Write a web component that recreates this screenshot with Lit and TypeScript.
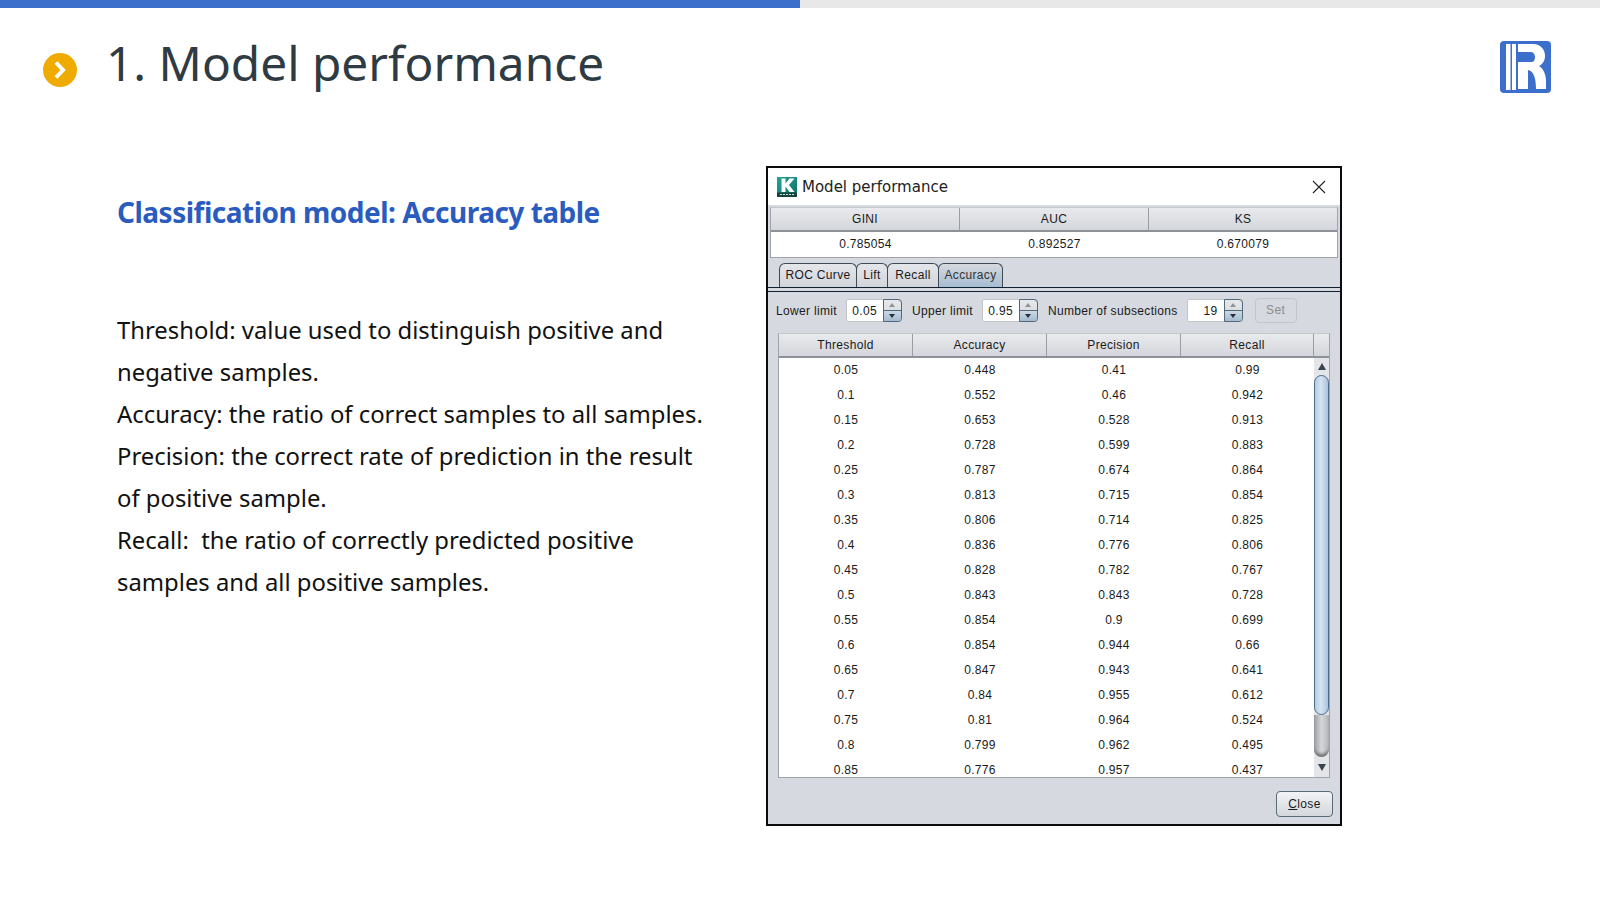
import { LitElement, html, css } from "lit";
import { customElement } from "lit/decorators.js";

const rows = [
  ["0.05","0.448","0.41","0.99"],["0.1","0.552","0.46","0.942"],["0.15","0.653","0.528","0.913"],
  ["0.2","0.728","0.599","0.883"],["0.25","0.787","0.674","0.864"],["0.3","0.813","0.715","0.854"],
  ["0.35","0.806","0.714","0.825"],["0.4","0.836","0.776","0.806"],["0.45","0.828","0.782","0.767"],
  ["0.5","0.843","0.843","0.728"],["0.55","0.854","0.9","0.699"],["0.6","0.854","0.944","0.66"],
  ["0.65","0.847","0.943","0.641"],["0.7","0.84","0.955","0.612"],["0.75","0.81","0.964","0.524"],
  ["0.8","0.799","0.962","0.495"],["0.85","0.776","0.957","0.437"],
];

@customElement("app-root")
export class AppRoot extends LitElement {
  static styles = css`
    :host { display: block; width: 1600px; height: 900px; overflow: hidden; background: #fff; font-family: "Noto Sans", sans-serif; }
    .progress { height: 8px; background: #e8e8e8; }
    .progress div { width: 800px; height: 8px; background: #3c6ecb; }
    .head { display: flex; align-items: flex-start; height: 158px; }
    .bullet { width: 34px; height: 34px; margin: 45px 0 0 43px; flex: none; }
    h1 { margin: 20px 0 0 29px; font-size: 47.8px; line-height: 70px; font-weight: 400; color: #2f3b43; flex: 1; }
    .logo { width: 51px; height: 52px; margin: 33px 49px 0 0; flex: none; }
    .main { display: flex; align-items: flex-start; }
    .left { width: 649px; margin-left: 117px; flex: none; }
    h2 { margin: 26px 0 0; font-size: 28px; line-height: 40px; font-weight: 700; color: #2a5cc0; letter-spacing: -0.5px; }
    .desc { margin: 77px 0 0; font-size: 23.85px; line-height: 42px; color: #111; white-space: pre-wrap; }

    .dlg { width: 576px; height: 660px; box-sizing: border-box; border: 2px solid #0c0c0c; background: #d6d9df; display: flex; flex-direction: column; font: 12px "Liberation Sans", Arial, sans-serif; letter-spacing: 0.33px; color: #1a1a1a; }
    .tb { height: 37px; background: #fff; display: flex; align-items: center; flex: none; letter-spacing: 0; }
    .tb .k { width: 20px; height: 20px; margin: 0 5px 0 9px; }
    .tb span { flex: 1; font: 15px "DejaVu Sans", sans-serif; color: #222; }
    .tb .x { width: 14px; height: 14px; margin-right: 14px; }
    .metrics { margin: 2px 2px 0 2px; border: 1px solid #a0a4aa; border-top: 1px solid #c4c7cc; background: #fff; flex: none; }
    .hrow { display: grid; background: linear-gradient(#e9eaed, #d3d6db); border-bottom: 2px solid #8e9298; height: 22px; line-height: 22px; text-align: center; }
    .hrow > div { border-right: 1px solid #9a9ea4; }
    .hrow > div:last-child { border-right: 0; }
    .m3 { grid-template-columns: 189px 189px 1fr; }
    .vrow { display: grid; grid-template-columns: 189px 189px 1fr; height: 25px; line-height: 25px; text-align: center; }
    .tabs { display: flex; margin: 5px 0 0 11px; height: 24px; flex: none; }
    .tab { box-sizing: border-box; height: 24px; line-height: 22px; border: 1px solid #3f4a55; border-bottom: 0; border-radius: 6px 6px 0 0; text-align: center; background: linear-gradient(#e4e6ea, #d2d5db); margin-right: -1px; }
    .tab.a { background: linear-gradient(#d6d9df, #a6bdd2); color: #333; }
    .tab-w1 { width: 78px; } .tab-w2 { width: 32px; } .tab-w3 { width: 52px; } .tab-w4 { width: 65px; }
    .tl { height: 3px; border-top: 1px solid #0f2030; border-bottom: 1px solid #0f2030; flex: none; }
    .ctl { display: flex; align-items: center; height: 25px; margin: 6px 0 0 8px; flex: none; white-space: nowrap; }
    .lbl { margin-right: 9px; }
    .lbl.n { margin-left: 10px; }
    .spin { box-sizing: border-box; width: 56px; display: flex; height: 23px; border: 1px solid #c3c6cb; border-radius: 2px; background: #fff; flex: none; }
    .spin .v { flex: 1; line-height: 23px; text-align: right; padding-right: 6px; }
    .btns { width: 17px; border: 1px solid #54687c; border-radius: 0 4px 4px 0; margin: -1px -1px -1px 0; display: flex; flex-direction: column; background: linear-gradient(#e6e8eb, #d2d5da); overflow: hidden; }
    .btns div { flex: 1; display: flex; align-items: center; justify-content: center; }
    .btns div + div { background: linear-gradient(#cdd9e4, #a3bbd0); border-top: 1px solid #54687c; }
    .up { width: 0; height: 0; border: 3px solid transparent; border-top: 0; border-bottom: 4px solid #8f9499; }
    .dn { width: 0; height: 0; border: 3px solid transparent; border-bottom: 0; border-top: 4px solid #26303a; }
    .set { box-sizing: border-box; width: 42px; height: 25px; line-height: 23px; text-align: center; border: 1px solid #c1c4ca; border-radius: 4px; color: #8a8d92; background: #d6d9df; margin-left: 12px; }
    .tbl { box-sizing: border-box; width: 552px; height: 445px; margin: 10px 0 0 10px; border: 1px solid #a0a4aa; border-top-color: #c4c7cc; background: #fff; overflow: hidden; flex: none; }
    .t4 { grid-template-columns: 134px 134px 134px 133px 1fr; height: 22px; line-height: 22px; }
    .body { display: flex; height: 420px; }
    .data { width: 535px; flex: none; }
    .r { display: grid; grid-template-columns: 134px 134px 134px 133px; height: 25px; line-height: 25px; text-align: center; }
    .sb { width: 15px; height: 419px; flex: none; display: flex; flex-direction: column; background: #e3e5e9; }
    .sbb { height: 17px; display: flex; align-items: center; justify-content: center; flex: none; }
    .sbb.d { height: 20px; }
    .sbup { width: 0; height: 0; border: 4px solid transparent; border-top: 0; border-bottom: 7px solid #3a444e; }
    .sbdn { width: 0; height: 0; border: 4px solid transparent; border-bottom: 0; border-top: 7px solid #3a444e; }
    .thumb { height: 340px; flex: none; box-sizing: border-box; border: 1px solid #4b6a8c; border-radius: 10px; background: linear-gradient(90deg, #b4cde4, #d6e4f0 45%, #a9c4de); }
    .track { flex: 1; background: linear-gradient(90deg, #9c9fa3, #d4d6d9 50%, #b4b6ba); border-radius: 0 0 8px 8px; box-shadow: inset 0 -4px 3px -1px #777; }
    .foot { display: flex; justify-content: flex-end; padding: 13px 7px 0 0; }
    .close { box-sizing: border-box; width: 57px; height: 26px; line-height: 24px; text-align: center; border: 1px solid #5e6a75; border-radius: 4px; background: linear-gradient(#f2f3f5, #d4d7dc); }
    u { text-decoration: underline; }
  `;

  spin(v: string) {
    return html`<div class="spin"><div class="v">${v}</div><div class="btns"><div><i class="up"></i></div><div><i class="dn"></i></div></div></div>`;
  }

  render() {
    return html`
      <div class="progress"><div></div></div>
      <div class="head">
        <svg class="bullet" viewBox="0 0 34 34"><circle cx="17" cy="17" r="17" fill="#f0ab00"/><path d="M13 9.5 L20 17 L13 24.5" fill="none" stroke="#fff" stroke-width="4"/></svg>
        <h1>1. Model performance</h1>
        <svg class="logo" viewBox="0 0 51 52">
          <rect width="51" height="52" rx="4" fill="#3c6ecb"/>
          <rect x="6" y="3" width="4.5" height="46" fill="#fff"/><rect x="12" y="3" width="4" height="46" fill="#fff"/>
          <path fill="#fff" d="M18 3H33C41 3 45 9 45 15C45 19 43 23 39 25C43 27 46 33 46 40V48H36C36 38 34 30 28 29V48H18V21H32C34 21 35 18 35 16C35 13 33 11 31 11H18Z"/>
        </svg>
      </div>
      <div class="main">
        <div class="left">
          <h2>Classification model: Accuracy table</h2>
          <p class="desc">Threshold: value used to distinguish positive and
negative samples.
Accuracy: the ratio of correct samples to all samples.
Precision: the correct rate of prediction in the result
of positive sample.
Recall:  the ratio of correctly predicted positive
samples and all positive samples.</p>
        </div>
        <div class="dlg">
          <div class="tb">
            <svg class="k" viewBox="0 0 20 20"><defs><linearGradient id="kg" x1="0" y1="0" x2="1" y2="1"><stop offset="0" stop-color="#25a596"/><stop offset="1" stop-color="#0a6f68"/></linearGradient></defs><rect width="20" height="20" fill="url(#kg)"/><rect y="15.5" width="20" height="4.5" fill="#17433f"/><path d="M3 17.5H17" stroke="#cfe3df" stroke-width="1" stroke-dasharray="2 1"/><path d="M4.5 1.5H8.5V6.5L12.5 1.5H17.5L12 8L17.5 15H12.5L8.5 9.5V15H4.5Z" fill="#fff"/></svg>
            <span>Model performance</span>
            <svg class="x" viewBox="0 0 14 14"><path d="M1 1L13 13M13 1L1 13" stroke="#222" stroke-width="1.1"/></svg>
          </div>
          <div class="metrics">
            <div class="hrow m3"><div>GINI</div><div>AUC</div><div>KS</div></div>
            <div class="vrow"><div>0.785054</div><div>0.892527</div><div>0.670079</div></div>
          </div>
          <div class="tabs">
            <div class="tab tab-w1">ROC Curve</div>
            <div class="tab tab-w2">Lift</div>
            <div class="tab tab-w3">Recall</div>
            <div class="tab a tab-w4">Accuracy</div>
          </div>
          <div class="tl"></div>
          <div class="ctl">
            <span class="lbl">Lower limit</span>${this.spin("0.05")}
            <span class="lbl n">Upper limit</span>${this.spin("0.95")}
            <span class="lbl n">Number of subsections</span>${this.spin("19")}
            <div class="set">Set</div>
          </div>
          <div class="tbl">
            <div class="hrow t4"><div>Threshold</div><div>Accuracy</div><div>Precision</div><div>Recall</div><div></div></div>
            <div class="body">
              <div class="data">${rows.map(r => html`<div class="r">${r.map(c => html`<div>${c}</div>`)}</div>`)}</div>
              <div class="sb">
                <div class="sbb"><i class="sbup"></i></div>
                <div class="thumb"></div>
                <div class="track"></div>
                <div class="sbb d"><i class="sbdn"></i></div>
              </div>
            </div>
          </div>
          <div class="foot"><div class="close"><u>C</u>lose</div></div>
        </div>
      </div>
    `;
  }
}
